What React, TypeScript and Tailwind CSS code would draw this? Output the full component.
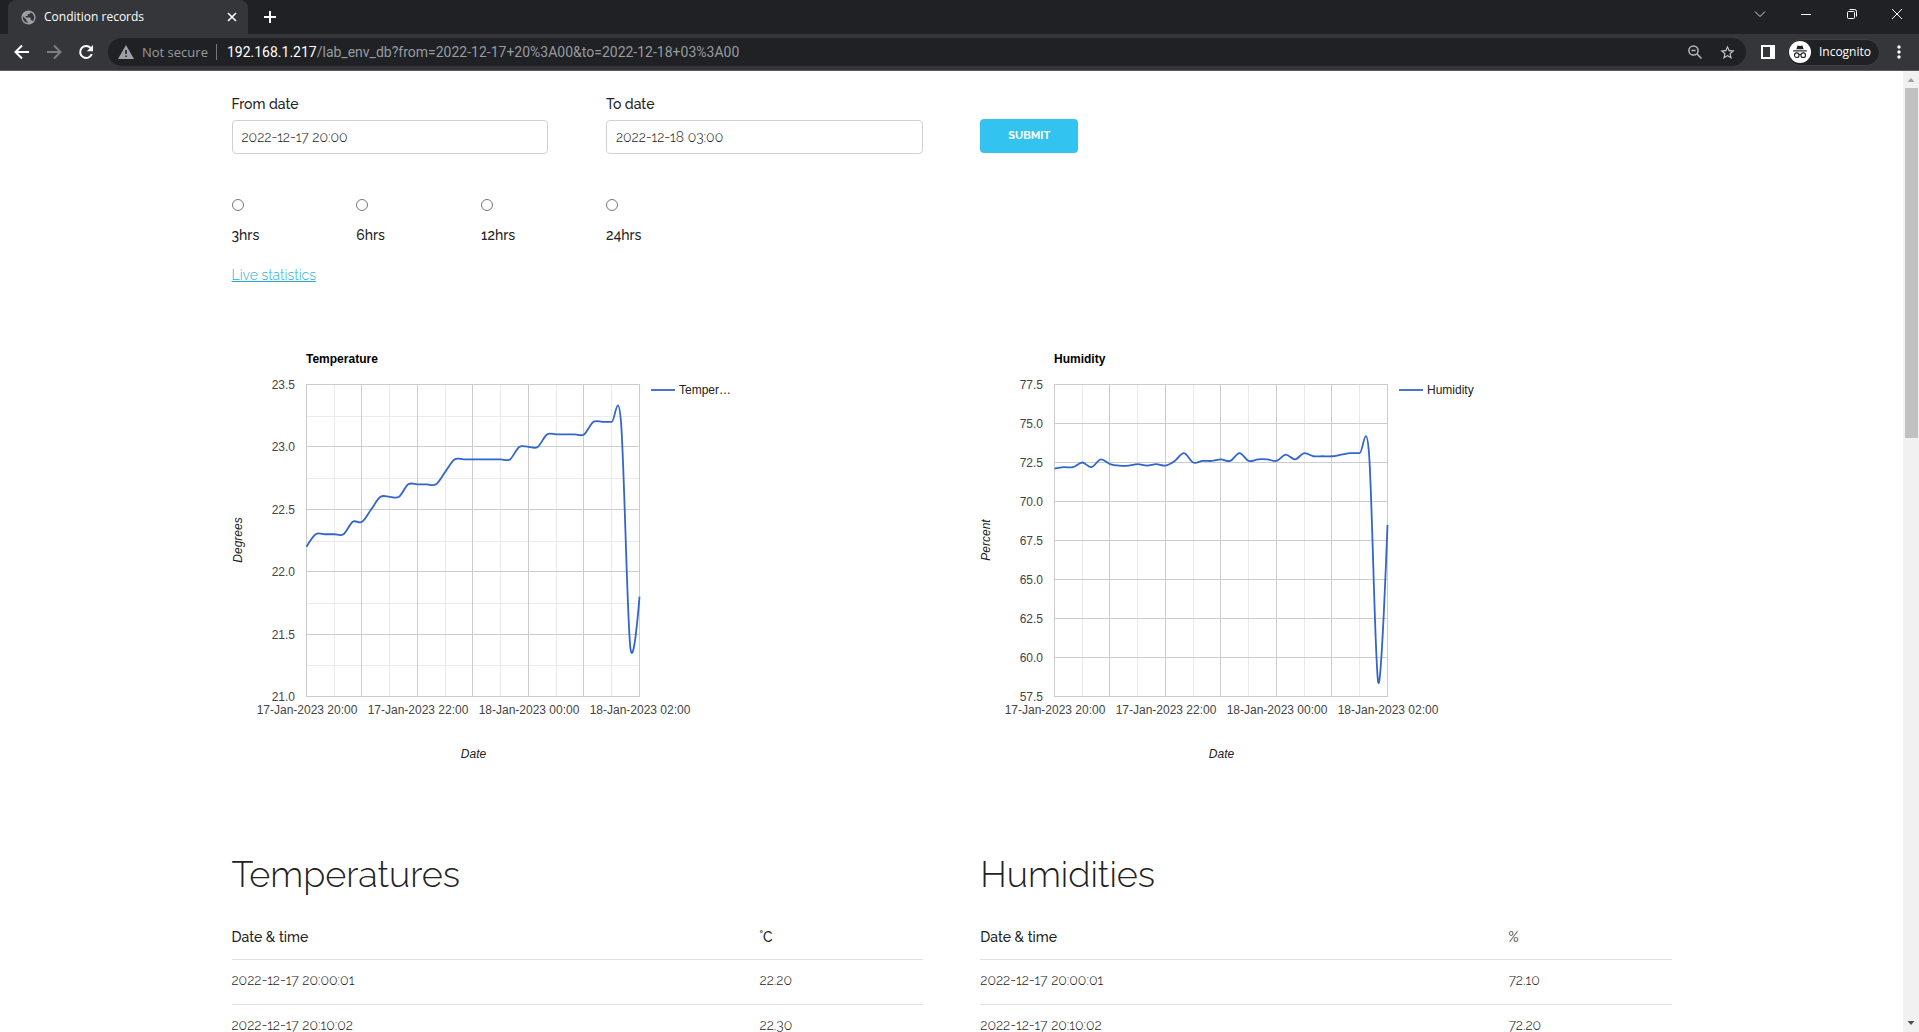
import React from "react";

type ChartProps = {
  title: string;
  axis: string;
  legend: string;
  min: number;
  max: number;
  step: number;
  minor: boolean;
  values: number[];
};

const TEMPERATURE = [
  22.2, 22.3, 22.3, 22.3, 22.3, 22.4, 22.4, 22.5, 22.6, 22.6, 22.6, 22.7, 22.7, 22.7, 22.7, 22.8, 22.9, 22.9, 22.9,
  22.9, 22.9, 22.9, 22.9, 23.0, 23.0, 23.0, 23.1, 23.1, 23.1, 23.1, 23.1, 23.2, 23.2, 23.2, 23.2, 21.4, 21.8,
];

const HUMIDITY = [
  72.1, 72.2, 72.2, 72.5, 72.2, 72.7, 72.4, 72.3, 72.3, 72.4, 72.3, 72.4, 72.3, 72.6, 73.1, 72.5, 72.6, 72.6, 72.7,
  72.6, 73.1, 72.6, 72.7, 72.7, 72.6, 73.0, 72.7, 73.1, 72.9, 72.9, 72.9, 73.0, 73.1, 73.1, 73.1, 58.4, 68.5,
];

const PLOT = { left: 74, top: 44.5, width: 333, height: 312 };

/** Smooth line through evenly spaced samples (cubic segments with neighbour-based tangents). */
function smoothPath(points: [number, number][]) {
  let d = `M${points[0][0]},${points[0][1]}`;
  const tangent = (i: number): [number, number] => {
    if (i === 0 || i === points.length - 1) return [0, 0];
    return [(points[i + 1][0] - points[i - 1][0]) / 6, (points[i + 1][1] - points[i - 1][1]) / 6];
  };
  for (let i = 0; i < points.length - 1; i++) {
    const [ax, ay] = tangent(i);
    const [bx, by] = tangent(i + 1);
    const [x0, y0] = points[i];
    const [x1, y1] = points[i + 1];
    d += `C${x0 + ax},${y0 + ay} ${x1 - bx},${y1 - by} ${x1},${y1}`;
  }
  return d;
}

function LineChart({ title, axis, legend, min, max, step, minor, values }: ChartProps) {
  const { left, top, width, height } = PLOT;
  const y = (v: number) => top + ((max - v) / (max - min)) * height;
  const x = (i: number) => left + (i / (values.length - 1)) * width;
  const ticks = Array.from({ length: Math.round((max - min) / step) + 1 }, (_, i) => min + i * step);
  const times = ["17-Jan-2023 20:00", "17-Jan-2023 22:00", "18-Jan-2023 00:00", "18-Jan-2023 02:00"];
  return (
    <svg
      viewBox="0 0 530 440"
      className="block h-[440px] w-[530px] max-w-full overflow-visible font-['Liberation_Sans',Arial,sans-serif] text-xs"
      role="img"
      aria-label={`${title} chart`}
    >
      <text x={left} y="23" className="fill-black font-bold">{title}</text>
      {[0, 1, 2, 3, 4, 5].map((h) => (
        <line key={h} x1={Math.round(x(h * 6 + 3)) + 0.5} x2={Math.round(x(h * 6 + 3)) + 0.5} y1={top} y2={top + height} stroke="#ebebeb" />
      ))}
      {minor &&
        ticks.slice(1).map((t) => {
          const my = Math.round(y(t - step / 2)) + 0.5;
          return <line key={t} x1={left} x2={left + width} y1={my} y2={my} stroke="#ebebeb" />;
        })}
      {[0, 1, 2, 3, 4, 5, 6].map((h) => {
        const vx = Math.floor(x(h * 6)) + 0.5;
        return <line key={h} x1={vx} x2={vx} y1={top} y2={top + height} stroke="#cccccc" />;
      })}
      {ticks.map((t) => {
        const hy = Math.floor(y(t)) + 0.5;
        return (
          <g key={t}>
            <line x1={left} x2={left + width + 1} y1={hy} y2={hy} stroke="#cccccc" />
            <text x={left - 11} y={hy + 4} textAnchor="end" fill="#444444">{t.toFixed(1)}</text>
          </g>
        );
      })}
      {times.map((t, i) => (
        <text key={t} x={x(i * 12) + 1} y="374" textAnchor="middle" fill="#444444">{t}</text>
      ))}
      <path d={smoothPath(values.map((v, i) => [x(i) + 0.5, y(v)]))} fill="none" stroke="#3366cc" strokeWidth="1.8" />
      <line x1="419" x2="443" y1="50" y2="50" stroke="#3366cc" strokeWidth="1.8" />
      <text x="447" y="54" fill="#222222">{legend}</text>
      <text x={left + width / 2 + 1} y="418" textAnchor="middle" fill="#222222" fontStyle="italic">Date</text>
      <text transform="translate(10 200) rotate(-90)" textAnchor="middle" fill="#222222" fontStyle="italic">{axis}</text>
    </svg>
  );
}

function Records({ title, unit, unitClass, rows }: { title: string; unit: string; unitClass: string; rows: string[][] }) {
  return (
    <section className="col-span-6">
      <h1 className="text-4xl leading-[44px] font-light">{title}</h1>
      <table className="mt-[18px] w-full table-fixed border-collapse text-left text-sm leading-4 font-light text-[#222]">
        <thead>
          <tr className="h-[45px] border-b border-[#e1e1e1]">
            <th scope="col" className="w-[76.4%] pt-0.5 font-medium">Date &amp; time</th>
            <th scope="col" className={unitClass}>{unit}</th>
          </tr>
        </thead>
        <tbody>
          {rows.map(([time, value]) => (
            <tr key={time} className="h-[45px] border-b border-[#e1e1e1]">
              <td className="pb-[3px]">{time}</td>
              <td className="pb-[3px]">{value}</td>
            </tr>
          ))}
        </tbody>
      </table>
    </section>
  );
}

function DateField({ id, label, value }: { id: string; label: string; value: string }) {
  return (
    <div className="col-span-3">
      <label htmlFor={id} className="mb-1.5 block text-sm leading-5 font-medium">{label}</label>
      <input
        id={id}
        type="text"
        defaultValue={value}
        className="block h-[34px] w-full rounded border border-[#d1d1d1] bg-white px-[9px] text-sm font-light text-[#222]"
      />
    </div>
  );
}

function BrowserChrome() {
  return (
    <header className="shrink-0 border-b border-[#5d5a60] bg-[#35363a] font-['Open_Sans','Noto_Sans',sans-serif]">
      <div className="flex h-[34px] items-stretch bg-[#202124] text-white">
        <div className="ml-2 flex w-[240px] items-center rounded-t-lg bg-[#35363a] pr-2 pl-3">
          <svg viewBox="0 0 24 24" className="size-[17px]" aria-hidden="true">
            <circle cx="12" cy="12" r="10" fill="#9aa0a6" />
            <path d="M4.200 10.200 9 15v1c0 1.100.9 2 2 2v1.900A8 8 0 0 1 4.200 10.200zM17.900 17.400A2 2 0 0 0 16 16h-1v-3c0-.55-.45-1-1-1H8v-2h2c.55 0 1-.45 1-1V7h2a2 2 0 0 0 2-2v-.4a8 8 0 0 1 2.900 12.800z" fill="#35363a" />
          </svg>
          <span className="ml-[7px] grow text-xs">Condition records</span>
          <button aria-label="Close tab" className="flex size-4 items-center justify-center">
            <svg viewBox="0 0 10 10" className="size-2.5" stroke="white" strokeWidth="1.6"><path d="M1 1l8 8M9 1L1 9" /></svg>
          </button>
        </div>
        <button aria-label="New tab" className="ml-3 flex w-5 items-center justify-center">
          <svg viewBox="0 0 12 12" className="size-3" stroke="white" strokeWidth="2"><path d="M6 0v12M0 6h12" /></svg>
        </button>
        <div className="ml-auto flex h-7 items-stretch">
          <button aria-label="Search tabs" className="flex w-[46px] items-center justify-center">
            <svg viewBox="0 0 12 12" className="size-3" fill="none" stroke="#ddd"><path d="M1 3.500l5 5 5-5" /></svg>
          </button>
          <button aria-label="Minimize" className="flex w-[46px] items-center justify-center">
            <svg viewBox="0 0 10 10" className="size-2.5" stroke="white"><path d="M0 5.500h10" /></svg>
          </button>
          <button aria-label="Restore" className="flex w-[46px] items-center justify-center">
            <svg viewBox="0 0 10 10" className="size-2.5" fill="none" stroke="white">
              <rect x=".5" y="2.500" width="7" height="7" rx="1" />
              <path d="M2.500.5h5a2 2 0 0 1 2 2v5" />
            </svg>
          </button>
          <button aria-label="Close window" className="flex w-11 items-center justify-center">
            <svg viewBox="0 0 10 10" className="size-2.5" stroke="white"><path d="M0 0l10 10M10 0L0 10" /></svg>
          </button>
        </div>
      </div>
      <div className="flex h-9 items-center px-3">
        <button aria-label="Back" className="mr-3 size-5">
          <svg viewBox="0 0 20 20" className="size-5" fill="none" stroke="white" strokeWidth="2"><path d="M17 10H4M10 3.500L3.500 10l6.500 6.500" /></svg>
        </button>
        <button aria-label="Forward" className="mr-3 size-5">
          <svg viewBox="0 0 20 20" className="size-5" fill="none" stroke="#7d7e81" strokeWidth="2"><path d="M3 10h13M10 3.500l6.500 6.500-6.500 6.500" /></svg>
        </button>
        <button aria-label="Reload" className="mr-3 size-5">
          <svg viewBox="0 0 20 20" className="size-5">
            <path d="M15.800 12a6 6 0 1 1-1.300-6.200" fill="none" stroke="white" strokeWidth="2" />
            <path d="M17 3v6.200h-6.200z" fill="white" />
          </svg>
        </button>
        <div className="flex h-7 grow items-center rounded-full bg-[#202124] px-2.5 text-sm text-[#969ba1]">
          <svg viewBox="0 0 16 14" className="h-3.5 w-4" aria-hidden="true">
            <path d="M8 0l8 14H0z" fill="#9aa0a6" />
            <path d="M7.200 5h1.600v4H7.200zM7.200 10.500h1.600v1.600H7.200z" fill="#202124" />
          </svg>
          <span className="ml-2 text-[13px]">Not secure</span>
          <span className="ml-2 h-4 w-px bg-[#74777b]" />
          <span className="ml-2.5 grow font-[Roboto,sans-serif]"><span className="text-white">192.168.1.217</span>/lab_env_db?from=2022-12-17+20%3A00&amp;to=2022-12-18+03%3A00</span>
          <button aria-label="Zoom">
            <svg viewBox="0 0 14 14" className="size-3.5" fill="none" stroke="#b5b8bc" strokeWidth="1.500">
              <circle cx="5.500" cy="5.500" r="4.600" />
              <path d="M9 9l4.500 4.500M3.500 5.500h4" />
            </svg>
          </button>
          <button aria-label="Bookmark" className="ml-[17px]">
            <svg viewBox="0 0 24 24" className="size-[17px]" fill="#c4c7c9">
              <path d="M22 9.240l-7.190-.62L12 2 9.190 8.630 2 9.240l5.460 4.730L5.820 21 12 17.270 18.180 21l-1.630-7.030L22 9.240zM12 15.400l-3.760 2.270 1-4.280-3.320-2.880 4.380-.38L12 6.100l1.710 4.040 4.380.38-3.320 2.880 1 4.280L12 15.400z" />
            </svg>
          </button>
        </div>
        <button aria-label="Side panel" className="ml-[15px]">
          <svg viewBox="0 0 14 14" className="size-3.5"><path d="M0 0h14v14H0zM2 2v10h7V2z" fill="white" fillRule="evenodd" /></svg>
        </button>
        <div className="ml-3 flex h-[27px] items-center rounded-full border border-[#3f4043] bg-[#202124] pr-2 pl-px text-xs text-white">
          <svg viewBox="0 0 24 24" className="mr-2 size-[22px]" aria-hidden="true">
            <circle cx="12" cy="12" r="12" fill="white" />
            <path d="M8 9l1.300-4.200 2.700.6 2.700-.6L16 9z" fill="#202124" />
            <path d="M4.500 10.800h15" stroke="#202124" strokeWidth="1.300" />
            <g fill="none" stroke="#202124" strokeWidth="1.200">
              <circle cx="8.500" cy="15.500" r="2.500" />
              <circle cx="15.500" cy="15.500" r="2.500" />
              <path d="M11 15.200c.6-.5 1.400-.5 2 0" />
            </g>
          </svg>
          Incognito
        </div>
        <button aria-label="Menu" className="ml-[11px] flex w-4 justify-center">
          <svg viewBox="0 0 4 14" className="h-3.5 w-1" fill="white">
            <circle cx="2" cy="2" r="1.700" />
            <circle cx="2" cy="7" r="1.700" />
            <circle cx="2" cy="12" r="1.700" />
          </svg>
        </button>
      </div>
    </header>
  );
}

function Scrollbar() {
  return (
    <div className="flex w-4 shrink-0 flex-col items-center bg-[#f1f1f1]" aria-hidden="true">
      <svg viewBox="0 0 16 17" className="h-[17px] w-4" fill="#a3a3a3"><path d="M4.500 11h7L8 7z" /></svg>
      <div className="h-[36.4%] w-[13px] bg-[#c1c1c1]" />
      <svg viewBox="0 0 16 17" className="mt-auto h-[17px] w-4" fill="#505050"><path d="M4.500 6h7L8 10z" /></svg>
    </div>
  );
}

export default function App() {
  return (
    <div className="flex h-screen flex-col overflow-hidden bg-white">
      <BrowserChrome />
      <div className="flex min-h-0 grow">
        <main className="grow overflow-hidden font-[Raleway,Lato,sans-serif] text-[#222]">
          <div className="mx-auto w-4/5 max-w-[1440px] pt-[23px]">
            <form onSubmit={(e: React.FormEvent) => e.preventDefault()}>
              <div className="grid grid-cols-12 items-end gap-x-[4%]">
                <DateField id="from" label="From date" value="2022-12-17 20:00" />
                <DateField id="to" label="To date" value="2022-12-18 03:00" />
                <div className="col-span-3 pb-px">
                  <button type="submit" className="block h-[34px] rounded bg-[#33c3f0] px-7 pt-px text-[11px] font-bold text-white">
                    SUBMIT
                  </button>
                </div>
              </div>
              <div className="mt-[45px] grid grid-cols-12 gap-x-[4%] text-sm font-medium">
                {["3hrs", "6hrs", "12hrs", "24hrs"].map((range) => (
                  <div key={range}>
                    <input id={range} type="radio" name="range" value={range} className="block size-3" />
                    <label htmlFor={range} className="mt-3.5 block leading-5">{range}</label>
                  </div>
                ))}
              </div>
            </form>
            <a href="#live" className="mt-5 block w-fit text-sm leading-5 font-light text-[#1eaedb] underline">Live statistics</a>

            <div className="mt-[55px] grid grid-cols-12 gap-x-[4%]">
              <div className="col-span-6">
                <LineChart title="Temperature" axis="Degrees" legend="Temper…" min={21} max={23.5} step={0.5} minor values={TEMPERATURE} />
              </div>
              <div className="col-span-6">
                <LineChart title="Humidity" axis="Percent" legend="Humidity" min={57.5} max={77.5} step={2.5} minor={false} values={HUMIDITY} />
              </div>
            </div>

            <div className="mt-[72px] grid grid-cols-12 gap-x-[4%]">
              <Records
                title="Temperatures"
                unit="˚C"
                unitClass="pt-0.5 font-medium"
                rows={[["2022-12-17 20:00:01", "22.20"], ["2022-12-17 20:10:02", "22.30"]]}
              />
              <Records
                title="Humidities"
                unit="%"
                unitClass="pt-0.5 font-normal"
                rows={[["2022-12-17 20:00:01", "72.10"], ["2022-12-17 20:10:02", "72.20"]]}
              />
            </div>
          </div>
        </main>
        <Scrollbar />
      </div>
    </div>
  );
}
